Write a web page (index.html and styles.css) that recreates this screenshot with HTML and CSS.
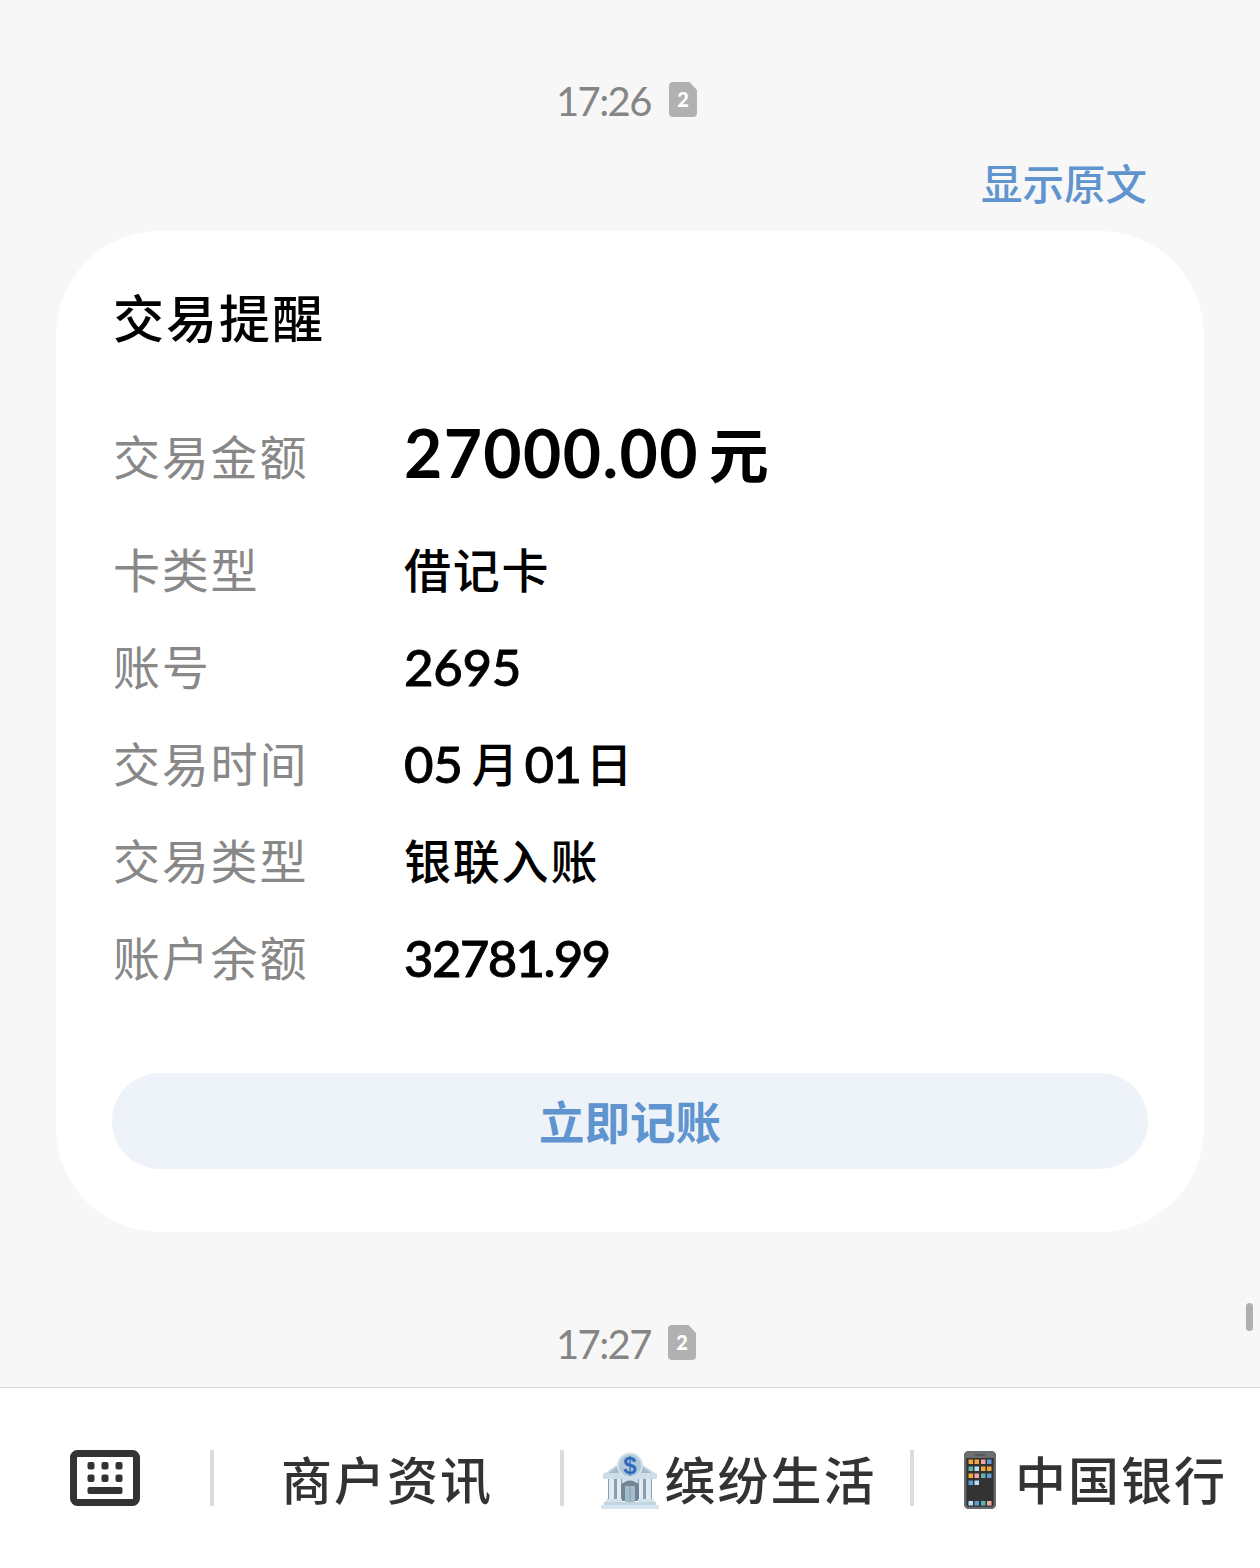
FILE: index.html
```html
<!DOCTYPE html>
<html lang="zh-CN">
  <head>
    <meta charset="UTF-8" />
    <meta name="viewport" content="width=device-width, initial-scale=1.0" />
    <title>交易提醒</title>
    <link rel="stylesheet" href="styles.css">
  </head>
  <body>
    <main class="messages">
      <div class="time">
        <span>17:26</span>
        <svg class="sim" viewBox="0 0 28 35">
          <path d="M4 0H20.500L28 8V31a4 4 0 0 1-4 4H4a4 4 0 0 1-4-4V4a4 4 0 0 1 4-4z" fill="#b1b1b1" />
          <text x="14" y="24.500" text-anchor="middle">2</text>
        </svg>
      </div>

      <a class="original">显示原文</a>

      <section class="card">
        <h1>交易提醒</h1>
        <dl>
          <div class="row row-amount">
            <dt>交易金额</dt>
            <dd><span class="num">27000.00</span><span class="unit">元</span></dd>
          </div>
          <div class="row">
            <dt>卡类型</dt>
            <dd>借记卡</dd>
          </div>
          <div class="row">
            <dt>账号</dt>
            <dd><span class="num">2695</span></dd>
          </div>
          <div class="row">
            <dt>交易时间</dt>
            <dd class="date"><span class="num">05</span><span class="month">月</span><span class="num day">01</span><span>日</span></dd>
          </div>
          <div class="row">
            <dt>交易类型</dt>
            <dd>银联入账</dd>
          </div>
          <div class="row">
            <dt>账户余额</dt>
            <dd><span class="num balance">32781.99</span></dd>
          </div>
        </dl>
        <button>立即记账</button>
      </section>

      <div class="time time-next">
        <span>17:27</span>
        <svg class="sim" viewBox="0 0 28 35">
          <path d="M4 0H20.500L28 8V31a4 4 0 0 1-4 4H4a4 4 0 0 1-4-4V4a4 4 0 0 1 4-4z" fill="#b1b1b1" />
          <text x="14" y="24.500" text-anchor="middle">2</text>
        </svg>
      </div>
      <i class="scrollbar"></i>
    </main>

    <!-- 底部菜单 -->
    <nav class="menu">
      <div class="keyboard">
        <svg width="70" height="56" viewBox="0 0 70 56">
          <rect x="3.500" y="3.500" width="63" height="49" rx="4" fill="none" stroke="#333" stroke-width="7" />
          <g fill="#333">
            <rect x="17.500" y="12" width="7" height="7.500" rx="2" />
            <rect x="31.500" y="12" width="7" height="7.500" rx="2" />
            <rect x="45.500" y="12" width="7" height="7.500" rx="2" />
            <rect x="17.500" y="24.500" width="7" height="7.500" rx="2" />
            <rect x="31.500" y="24.500" width="7" height="7.500" rx="2" />
            <rect x="45.500" y="24.500" width="7" height="7.500" rx="2" />
            <rect x="17.500" y="37" width="35" height="7" rx="2" />
          </g>
        </svg>
      </div>
      <div class="item">商户资讯</div>
      <div class="item item-life">
        <svg class="bank" width="58" height="58" viewBox="0 0 58 58">
          <path d="M3 24L29 6l26 18z" fill="#a9bac8" />
          <path d="M3 24L29 6l26 18" fill="none" stroke="#cbdbe6" stroke-width="2" />
          <rect x="7" y="27" width="44" height="23" fill="#8b9da9" />
          <rect x="21" y="27" width="16" height="5" fill="#cddeea" />
          <path d="M20 50V34q9-9 18 0v16z" fill="#718592" />
          <rect x="24" y="35" width="10" height="18" fill="#a3bdcc" />
          <path d="M29 35v18" stroke="#7f9aaa" />
          <rect x="2" y="22" width="54" height="6" rx="1" fill="#cddeea" />
          <g fill="#dfebf3">
            <rect x="8" y="28" width="5" height="22" />
            <rect x="16" y="28" width="4" height="22" />
            <rect x="38" y="28" width="4" height="22" />
            <rect x="45" y="28" width="5" height="22" />
          </g>
          <rect x="5" y="48" width="16" height="4" fill="#d3e2ec" />
          <rect x="37" y="48" width="16" height="4" fill="#d3e2ec" />
          <rect x="3" y="51" width="52" height="3" fill="#c3d4df" />
          <rect x="0" y="54" width="58" height="4" fill="#d5e4ee" />
          <circle cx="29" cy="14.500" r="12" fill="#b0c8d8" stroke="#d3e2ec" stroke-width="2" />
          <text x="29" y="23" text-anchor="middle">$</text>
        </svg>
        <span>缤纷生活</span>
      </div>
      <div class="item item-phone">
        <svg class="phone" width="32" height="58" viewBox="0 0 32 58">
          <rect x="1" y="1" width="30" height="56" rx="4" fill="#333" stroke="#686b6d" stroke-width="2.500" />
          <path d="M2 7V4q0-3 3-3h22q3 0 3 3v3z" fill="#6b6e70" />
          <path d="M11 4h10" stroke="#505355" stroke-width="1.500" />
          <g fill="#f2a83b">
            <rect x="4.500" y="8.500" width="4.500" height="4.500" />
            <rect x="10.500" y="8.500" width="4.500" height="4.500" />
            <rect x="17" y="15.500" width="4.500" height="4.500" />
            <rect x="23" y="15.500" width="4.500" height="4.500" />
            <rect x="4.500" y="22.500" width="4.500" height="4.500" />
          </g>
          <g fill="#f3a6a3">
            <rect x="17" y="8.500" width="4.500" height="4.500" />
            <rect x="10.500" y="22.500" width="4.500" height="4.500" />
            <rect x="23" y="50" width="4.500" height="4.500" />
          </g>
          <g fill="#5f9bd8">
            <rect x="23" y="8.500" width="4.500" height="4.500" />
            <rect x="23" y="22.500" width="4.500" height="4.500" />
            <rect x="4.500" y="29.500" width="4.500" height="4.500" />
            <rect x="10.500" y="50" width="4.500" height="4.500" />
          </g>
          <g fill="#55b8a8">
            <rect x="4.500" y="15.500" width="4.500" height="4.500" />
            <rect x="17" y="22.500" width="4.500" height="4.500" />
            <rect x="17" y="50" width="4.500" height="4.500" />
          </g>
          <g fill="#b9e1f6">
            <rect x="10.500" y="15.500" width="4.500" height="4.500" />
            <rect x="10.500" y="29.500" width="4.500" height="4.500" />
            <rect x="4.500" y="50" width="4.500" height="4.500" />
          </g>
        </svg>
        <span>中国银行</span>
      </div>
    </nav>
  </body>
</html>
```
FILE: styles.css
```css
* {
  box-sizing: border-box;
}

body {
  margin: 0;
  height: 1568px;
  display: flex;
  flex-direction: column;
  background: #f7f7f7;
  font-family: "Noto Sans CJK SC", sans-serif;
  color: #000;
  overflow: hidden;
}

/* 消息区域 */
.messages {
  position: relative;
  height: 1387px;
  padding: 76px 56px 0;
}

.time {
  display: flex;
  align-items: center;
  height: 50px;
  padding-left: 500px;
  font-family: Lato, sans-serif;
  font-size: 40px;
  letter-spacing: -1.600px;
  color: #858585;
}

.time span {
  width: 113px;
}

.sim {
  width: 28px;
  height: 35px;
  margin-top: -3px;
}

.sim text {
  font: 900 20px Lato, sans-serif;
  letter-spacing: 0;
  fill: #fff;
}

.original {
  display: block;
  height: 50px;
  margin: 31px 57px 0 0;
  line-height: 50px;
  text-align: right;
  font-size: 41.500px;
  font-weight: 500;
  color: #5f94ce;
}

/* 交易卡片 */
.card {
  height: 1001px;
  margin-top: 24px;
  padding: 55px 56px 0;
  border-radius: 104px;
  background: #fff;
}

h1 {
  margin: 0 0 0 1px;
  height: 60px;
  line-height: 60px;
  font-size: 51px;
  font-weight: 500;
  letter-spacing: 2px;
}

dl {
  margin: 43px 0 0;
}

.row {
  display: flex;
  align-items: center;
  height: 97px;
  font-size: 47px;
  letter-spacing: 1.800px;
}

.row-amount {
  height: 130px;
}

dt {
  width: 292px;
  padding-left: 1px;
  color: #888;
}

dd {
  display: flex;
  align-items: center;
  margin: 0;
  font-weight: 500;
}

.num {
  margin-top: 4px;
  font-family: Lato, sans-serif;
  font-size: 51px;
  letter-spacing: -0.300px;
  -webkit-text-stroke: 0.800px #000;
}

.balance {
  letter-spacing: -1.700px;
}

.month {
  margin-left: 9px;
}

.day {
  margin: 4px 5px 0 4px;
  letter-spacing: -1.500px;
}

.row-amount .num {
  margin-top: -4px;
  font-size: 66px;
  font-weight: 700;
  letter-spacing: 1.400px;
  -webkit-text-stroke: 0;
}

.unit {
  margin: -5px 0 0 10px;
  font-size: 60px;
  font-weight: 700;
}

button {
  display: block;
  width: 100%;
  height: 96px;
  margin-top: 69px;
  padding: 0 0 3px;
  border: none;
  border-radius: 48px;
  background: #eef3fa;
  font-family: inherit;
  font-size: 45.500px;
  font-weight: 700;
  color: #5f94ce;
}

.time-next {
  margin-top: 87px;
}

.time-next span {
  width: 112px;
}

.scrollbar {
  position: absolute;
  right: 7px;
  top: 1303px;
  width: 7px;
  height: 28px;
  border-radius: 4px;
  background: #b0b0b0;
}

/* 底部菜单 */
.menu {
  display: grid;
  grid-template-columns: 210px 350px 350px 350px;
  align-items: center;
  height: 181px;
  border-top: 1px solid #d8d8d8;
  background: #fff;
}

.keyboard {
  display: flex;
  justify-content: center;
}

.item {
  display: flex;
  align-items: center;
  justify-content: center;
  height: 56px;
  border-left: 4px solid #dcdcdc;
  font-size: 51px;
  font-weight: 500;
  letter-spacing: 2px;
  color: #333;
}

.item-life {
  padding-left: 4px;
}

.bank {
  margin: 3px 5px 0 0;
}

.bank text {
  font: 700 24px "Liberation Sans", sans-serif;
  letter-spacing: 0;
  fill: #2f6bb8;
}

.item-phone {
  padding-left: 17px;
}

.phone {
  margin: 3px 19px 0 0;
}
```
